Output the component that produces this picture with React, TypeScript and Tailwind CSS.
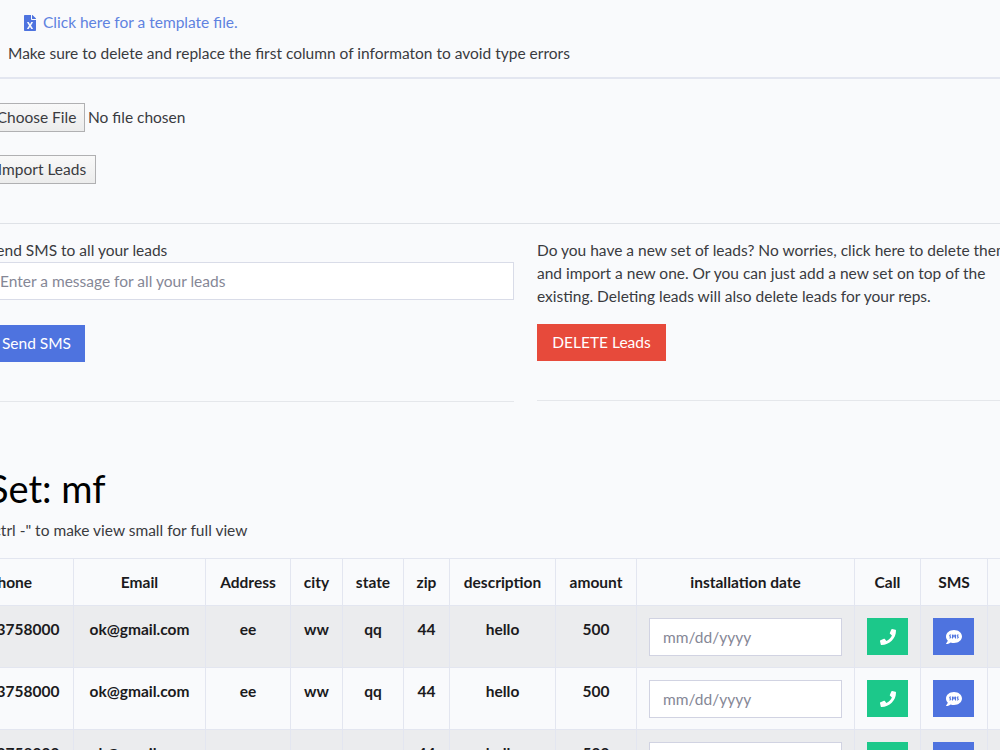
import type { ReactNode } from 'react'
import { FaFileExcel, FaPhone, FaSms } from 'react-icons/fa'

const columns = [
  { label: 'Phone', width: 'w-[127px]', tracking: 'tracking-[0px]' },
  { label: 'Email', width: 'w-[132px]', tracking: 'tracking-[0px]' },
  { label: 'Address', width: 'w-[85px]', tracking: 'tracking-[0px]' },
  { label: 'city', width: 'w-[52px]', tracking: 'tracking-[0px]' },
  { label: 'state', width: 'w-[61px]', tracking: 'tracking-[0px]' },
  { label: 'zip', width: 'w-[46px]', tracking: 'tracking-[0px]' },
  { label: 'description', width: 'w-[106px]', tracking: 'tracking-[0px]' },
  { label: 'amount', width: 'w-[81px]', tracking: 'tracking-[0px]' },
  { label: 'installation date', width: 'w-[218px]', tracking: 'tracking-[0px]' },
  { label: 'Call', width: 'w-[66px]', tracking: 'tracking-[0px]' },
  { label: 'SMS', width: 'w-[67px]', tracking: 'tracking-[0px]' },
  { label: '', width: 'w-[66px]', tracking: 'tracking-[0px]' },
]

const lead = {
  phone: '18583758000',
  email: 'ok@gmail.com',
  address: 'ee',
  city: 'ww',
  state: 'qq',
  zip: '44',
  description: 'hello',
  amount: '500',
}

const leads = [lead, lead, lead]

function Cell({ children, className = '' }: { children?: ReactNode; className?: string }) {
  return <td className={`border border-[#e3e6f0] p-0 text-center align-top ${className}`}>{children}</td>
}

function LeadRow({ data }: { data: typeof lead }) {
  return (
    <tr className="h-[62px] odd:bg-[#ebecee]">
      <Cell className="pt-3">{data.phone}</Cell>
      <Cell className="pt-3">{data.email}</Cell>
      <Cell className="pt-3">{data.address}</Cell>
      <Cell className="pt-3">{data.city}</Cell>
      <Cell className="pt-3">{data.state}</Cell>
      <Cell className="pt-3">{data.zip}</Cell>
      <Cell className="pt-3">{data.description}</Cell>
      <Cell className="pt-3">{data.amount}</Cell>
      <Cell className="px-3 pt-3">
        <input
          type="text"
          placeholder="mm/dd/yyyy"
          className="block h-[38px] w-[193px] border border-[#d1d3e2] bg-white px-[13px] font-normal placeholder:text-[#858796]"
        />
      </Cell>
      <Cell className="px-3 pt-3">
        <button className="flex h-[37px] w-[41px] items-center justify-center bg-[#1cc88a] text-white">
          <FaPhone size={16} />
        </button>
      </Cell>
      <Cell className="px-3 pt-3">
        <button className="flex h-[37px] w-[41px] items-center justify-center bg-[#4e73df] text-white">
          <FaSms size={16} />
        </button>
      </Cell>
      <Cell className="px-3 pt-3">
        <button className="block h-[37px] w-[41px] bg-[#36b9cc]" />
      </Cell>
    </tr>
  )
}

export default function App() {
  return (
    <div className="h-[750px] w-[1000px] overflow-hidden bg-[#f9fafc] font-['Lato',sans-serif] text-[15.5px] leading-[23px] text-[#3a3b3f]">
      <div className="-ml-3 w-[1075px]">
        <div className="pt-[11px] pl-[35px]">
          <a href="#" className="flex items-center text-[#5f82e0]">
            <FaFileExcel size={16} className="mr-[5px] -ml-px text-[#4e73df]" />
            <span>Click here for a template file.</span>
          </a>
        </div>
        <p className="mt-2 pl-5">
          Make sure to delete and replace the first column of informaton to avoid type errors
        </p>
        <hr className="mt-3 border-t-2 border-[#e3e6f0]" />

        <div className="mt-6 flex items-center">
          <button className="h-[29px] w-[97px] border border-[#b0b0b2] bg-linear-to-b from-[#f9f9f9] to-[#ececec]">
            Choose File
          </button>
          <span className="ml-[3px]">No file chosen</span>
        </div>
        <button className="mt-[23px] block h-[29px] w-[108px] border border-[#b0b0b2] bg-linear-to-b from-[#f9f9f9] to-[#ececec]">
          Import Leads
        </button>
        <hr className="mt-[39px] border-[#dfe2e7]" />

        <div className="flex gap-[23px]">
          <section className="w-[526px]">
            <label className="mt-[15px] block">Send SMS to all your leads</label>
            <input
              type="text"
              placeholder="Enter a message for all your leads"
              className="block h-[38px] w-full border border-[#d9dce8] bg-white px-[11px] placeholder:text-[#858796]"
            />
            <button className="mt-[25px] block h-[37px] w-[97px] bg-[#4e73df] text-white">Send SMS</button>
            <hr className="mt-[39px] border-[#e5e7eb]" />
          </section>
          <section className="w-[526px]">
            <p className="mt-[15px] whitespace-nowrap">
              Do you have a new set of leads? No worries, click here to delete them
              <br />
              and import a new one. Or you can just add a new set on top of the
              <br />
              existing. Deleting leads will also delete leads for your reps.
            </p>
            <button className="mt-4 block h-[37px] w-[129px] bg-[#e74a3b] text-white">DELETE Leads</button>
            <hr className="mt-[39px] border-[#e5e7eb]" />
          </section>
        </div>

        <h1 className="mt-[63px] text-[38px] leading-[46px] text-black">Set: mf</h1>
        <p className="mt-2">"ctrl -" to make view small for full view</p>

        <table className="mt-4 -ml-[42px] w-[1107px] table-fixed border-collapse font-bold text-[#1b1b1d]">
          <thead>
            <tr className="h-[47px]">
              {columns.map((col) => (
                <th key={col.label} className={`border border-[#e3e6f0] p-0 text-center ${col.width} ${col.tracking}`}>
                  {col.label}
                </th>
              ))}
            </tr>
          </thead>
          <tbody>
            {leads.map((item, i) => (
              <LeadRow key={i} data={item} />
            ))}
          </tbody>
        </table>
      </div>
    </div>
  )
}
